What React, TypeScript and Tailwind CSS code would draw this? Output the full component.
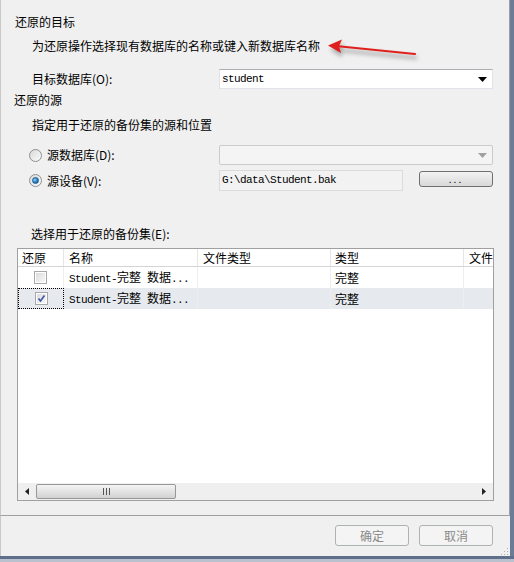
const cjk = { fontFamily: '"Noto Sans CJK SC", "Liberation Sans", sans-serif' };
const mono = { fontFamily: '"Liberation Mono", "Noto Sans CJK SC", monospace' };

function Radio({ checked }: { checked?: boolean }) {
  return (
    <span className="flex h-[13px] w-[13px] items-center justify-center rounded-full border border-[#8e8f8f] bg-gradient-to-br from-[#d9d9d9] to-[#fbfbfb]">
      {checked && (
        <span className="h-[7px] w-[7px] rounded-full border border-[#1f5a8c] bg-[radial-gradient(circle_at_35%_35%,#8fd3ff,#1a78c2_60%,#0d4d86)]" />
      )}
    </span>
  );
}

function Check({ checked }: { checked?: boolean }) {
  return (
    <span className="flex h-[13px] w-[13px] items-center justify-center border border-[#a8a8a8] bg-white p-[1px]">
      <span className="flex h-full w-full items-center justify-center bg-gradient-to-br from-[#dcdcdc] to-[#f7f7f7]">
        {checked && (
          <svg width="9" height="9" viewBox="0 0 9 9">
            <path d="M1.5 4.5 L3.5 7 L7.5 1.5" fill="none" stroke="#3c55a5" strokeWidth="1.6" />
          </svg>
        )}
      </span>
    </span>
  );
}

function DropArrow({ color }: { color: string }) {
  return (
    <svg width="9" height="5" viewBox="0 0 9 5">
      <path d="M0 0 H9 L4.5 5 Z" fill={color} />
    </svg>
  );
}

const cols = [
  { label: '还原', w: 'w-[46px]', pl: 'pl-[4px]' },
  { label: '名称', w: 'w-[134px]', pl: 'pl-[5px]' },
  { label: '文件类型', w: 'w-[133px]', pl: 'pl-[5px]' },
  { label: '类型', w: 'w-[133px]', pl: 'pl-[4px]' },
  { label: '文件', w: 'w-[40px]', pl: 'pl-[5px]' },
];

const rows = [
  { name: 'Student-完整 数据...', type: '完整', checked: false },
  { name: 'Student-完整 数据...', type: '完整', checked: true },
];

export default function App() {
  return (
    <div className="relative flex h-[562px] w-[514px] flex-col overflow-hidden bg-[#f0f0f0] text-[12px] text-black" style={cjk}>
      <div className="flex flex-1">
        <div className="flex w-[510px] flex-col">
          {/* main panel */}
          <div className="h-[516px] border-b border-l border-r border-[#a0a0a0] border-l-[#c8c8c8]">
            <div className="ml-[14px] mt-[14px] h-[16px] leading-[16px]">还原的目标</div>
            <div className="ml-[31px] mt-[8px] h-[16px] leading-[16px]">为还原操作选择现有数据库的名称或键入新数据库名称</div>

            <div className="mt-[15px] flex h-[20px] items-center">
              <div className="ml-[31px] w-[187px] leading-[16px]">目标数据库(O):</div>
              <div className="flex h-[20px] w-[274px] items-center justify-between border border-[#e2e3ea] border-t-[#abadb3] bg-white pl-[2px] pr-[5px]">
                <span className="text-[11px] tracking-[-0.6px]" style={mono}>student</span>
                <DropArrow color="#000" />
              </div>
            </div>

            <div className="ml-[13px] mt-[3px] h-[16px] leading-[16px]">还原的源</div>
            <div className="ml-[31px] mt-[9px] h-[16px] leading-[16px]">指定用于还原的备份集的源和位置</div>

            <div className="mt-[12px] flex h-[20px] items-center">
              <div className="ml-[28px] flex w-[190px] items-center gap-[5px]">
                <Radio />
                <span className="leading-[16px]">源数据库(D):</span>
              </div>
              <div className="flex h-[20px] w-[274px] items-center justify-end rounded-[2px] border border-[#c9cbcf] bg-[#f4f4f4] pr-[5px]">
                <DropArrow color="#a0a0a0" />
              </div>
            </div>

            <div className="mt-[5px] flex h-[21px] items-start">
              <div className="ml-[28px] flex h-[21px] w-[190px] items-center gap-[5px]">
                <Radio checked />
                <span className="leading-[16px]">源设备(V):</span>
              </div>
              <div className="flex h-[21px] w-[184px] items-center border border-[#dcdcdc] bg-[#f2f2f2] pl-[2px]">
                <span className="text-[11px] tracking-[-0.6px]" style={mono}>G:\data\Student.bak</span>
              </div>
              <div className="ml-[16px] mt-[1px] flex h-[16px] w-[74px] items-center justify-center rounded-[3px] border border-[#707070] bg-gradient-to-b from-[#f3f3f3] to-[#d8d8d8] text-[10px] leading-none tracking-[2px]">
                ...
              </div>
            </div>

            <div className="ml-[30px] mt-[35px] h-[16px] leading-[16px]">选择用于还原的备份集(E):</div>

            {/* backup set grid */}
            <div className="ml-[16px] mt-[6px] flex h-[253px] w-[477px] flex-col overflow-hidden border border-[#a0a0a0] bg-white">
              <div className="flex h-[18px] shrink-0 border-b border-[#d5d5d5]">
                {cols.map((c) => (
                  <div key={c.label} className={`${c.w} ${c.pl} shrink-0 border-r border-[#e5e5e5] leading-[17px]`}>
                    {c.label}
                  </div>
                ))}
              </div>
              {rows.map((r, i) => (
                <div key={i} className={`flex h-[21px] shrink-0 ${r.checked ? 'bg-[#e6eaee]' : 'bg-white'}`}>
                  <div
                    className={`flex w-[46px] shrink-0 items-center justify-center ${
                      r.checked ? 'border border-dotted border-black' : 'border-r border-[#eeeeee]'
                    }`}
                  >
                    <Check checked={r.checked} />
                  </div>
                  <div className="flex w-[134px] shrink-0 items-center border-r border-[#eeeeee] pl-[5px]">
                    <span className="text-[11px] tracking-[-0.6px]" style={mono}>
                      Student-<span className="text-[12px] tracking-normal" style={cjk}>完整</span> <span className="text-[12px] tracking-normal" style={cjk}>数据</span>...
                    </span>
                  </div>
                  <div className="w-[133px] shrink-0 border-r border-[#eeeeee]" />
                  <div className="flex w-[133px] shrink-0 items-center border-r border-[#eeeeee] pl-[4px]">{r.type}</div>
                  <div className="flex-1" />
                </div>
              ))}
              <div className="flex-1" />
              {/* horizontal scrollbar */}
              <div className="flex h-[17px] shrink-0 items-center bg-[#efefef]">
                <div className="flex w-[18px] justify-center">
                  <svg width="4" height="7" viewBox="0 0 4 7">
                    <path d="M4 0 V7 L0 3.5 Z" fill="#222" />
                  </svg>
                </div>
                <div className="flex h-[15px] w-[140px] items-center justify-center rounded-[2px] border border-[#979797] bg-gradient-to-b from-[#f4f4f4] to-[#d2d2d2]">
                  <svg width="7" height="7" viewBox="0 0 7 7">
                    <path d="M0.5 0 V7 M3.5 0 V7 M6.5 0 V7" stroke="#555" strokeWidth="1" />
                  </svg>
                </div>
                <div className="flex-1" />
                <div className="flex w-[18px] justify-center">
                  <svg width="4" height="7" viewBox="0 0 4 7">
                    <path d="M0 0 V7 L4 3.5 Z" fill="#222" />
                  </svg>
                </div>
              </div>
            </div>
          </div>

          {/* footer */}
          <div className="flex flex-1 items-start justify-end gap-[10px] border-l border-[#c8c8c8] pr-[17px] pt-[9px]">
            <button className="flex h-[21px] w-[74px] items-center justify-center rounded-[3px] border border-[#adb2b5] bg-[#f4f4f4] text-[#8a8a8a]">
              确定
            </button>
            <button className="flex h-[21px] w-[74px] items-center justify-center rounded-[3px] border border-[#adb2b5] bg-[#f4f4f4] text-[#8a8a8a]">
              取消
            </button>
          </div>
        </div>
        <div className="w-[4px] bg-[#6c7b96]" />
      </div>
      <div className="h-[3px] bg-[#5f6e8a]" />
      <div className="h-[3px] bg-[#b9c1cf]" />

      {/* resize grip */}
      <svg className="absolute left-[500px] top-[547px]" width="9" height="9" viewBox="0 0 9 9">
        <g fill="#b0b0b0">
          <rect x="7" y="1" width="1" height="1" />
          <rect x="4" y="4" width="1" height="1" />
          <rect x="7" y="4" width="1" height="1" />
          <rect x="1" y="7" width="1" height="1" />
          <rect x="4" y="7" width="1" height="1" />
          <rect x="7" y="7" width="1" height="1" />
        </g>
      </svg>

      {/* red annotation arrow */}
      <svg className="pointer-events-none absolute left-[320px] top-[34px]" width="110" height="32" viewBox="0 0 110 32">
        <defs>
          <filter id="sh" x="-20%" y="-50%" width="140%" height="200%">
            <feGaussianBlur stdDeviation="2" />
          </filter>
        </defs>
        <g filter="url(#sh)" opacity="0.45" transform="translate(2 4)">
          <path d="M95 20 L14 12" stroke="#555" strokeWidth="3" />
          <path d="M8 11.5 L22 5 L19 12.5 L20.5 19.5 Z" fill="#555" />
        </g>
        <path d="M95 20 L16 12" stroke="#e0201c" strokeWidth="2.2" strokeLinecap="round" />
        <path d="M8 11.5 L22 5.5 L19 12.2 L21 19 Z" fill="#e0201c" />
      </svg>
    </div>
  );
}
